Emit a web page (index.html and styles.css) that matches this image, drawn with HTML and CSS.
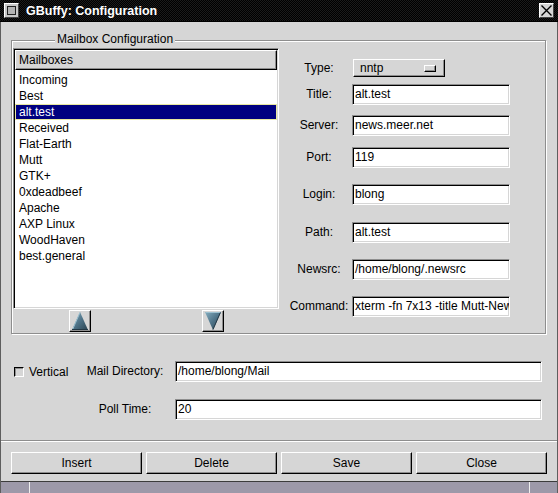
FILE: index.html
```html
<!DOCTYPE html>
<html lang="en">
<head>
    <meta charset="UTF-8">
    <title>GBuffy: Configuration</title>
    <link rel="stylesheet" href="styles.css">
</head>
<body>

<div class="titlebar">
    <span class="win-icon"></span>
    <span class="title">GBuffy: Configuration</span>
    <span class="close-btn">
        <svg width="13" height="13" viewBox="0 0 13 13">
            <path d="M1.5 1.5 L11.5 11.5 M11.5 1.5 L1.5 11.5" stroke="#000" stroke-width="1.4" fill="none"/>
        </svg>
    </span>
</div>

<div class="window">
    <div class="content">
        <!-- Mailbox configuration frame -->
        <div class="frame">
            <span class="frame-label">Mailbox Configuration</span>

            <div class="list-col">
                <div class="list">
                    <div class="list-head">Mailboxes</div>
                    <ul class="items">
                        <li>Incoming</li>
                        <li>Best</li>
                        <li class="selected">alt.test</li>
                        <li>Received</li>
                        <li>Flat-Earth</li>
                        <li>Mutt</li>
                        <li>GTK+</li>
                        <li>0xdeadbeef</li>
                        <li>Apache</li>
                        <li>AXP Linux</li>
                        <li>WoodHaven</li>
                        <li>best.general</li>
                    </ul>
                </div>
                <div class="arrows">
                    <div class="arrow-cell">
                        <button class="arrow-btn">
                            <svg width="16" height="18" viewBox="0 0 16 18">
                                <defs>
                                    <linearGradient id="upFill" x1="0" y1="0" x2="1" y2="1">
                                        <stop offset="0" stop-color="#86aec0"/>
                                        <stop offset="0.5" stop-color="#4e7388"/>
                                        <stop offset="1" stop-color="#2a4351"/>
                                    </linearGradient>
                                </defs>
                                <polygon points="8,0 16,18 0,18" fill="url(#upFill)"/>
                                <path d="M8 0.5 L0.6 17.5" stroke="#9cc0d0" stroke-width="1" fill="none"/>
                                <path d="M0 17.5 L16 17.5" stroke="#233845" stroke-width="1" fill="none"/>
                            </svg>
                        </button>
                    </div>
                    <div class="arrow-cell">
                        <button class="arrow-btn">
                            <svg width="16" height="18" viewBox="0 0 16 18">
                                <defs>
                                    <linearGradient id="downFill" x1="0" y1="0" x2="1" y2="1">
                                        <stop offset="0" stop-color="#86aec0"/>
                                        <stop offset="0.5" stop-color="#4e7388"/>
                                        <stop offset="1" stop-color="#2a4351"/>
                                    </linearGradient>
                                </defs>
                                <polygon points="0,0 16,0 8,18" fill="url(#downFill)"/>
                                <path d="M0.5 0.5 L15.5 0.5" stroke="#9cc0d0" stroke-width="1" fill="none"/>
                                <path d="M15.4 0.5 L8 17.5" stroke="#233845" stroke-width="1" fill="none"/>
                            </svg>
                        </button>
                    </div>
                </div>
            </div>

            <div class="props">
                <span class="prop-label type-label">Type:</span>
                <div class="option-menu">nntp<span class="indicator"></span></div>

                <span class="prop-label">Title:</span>
                <div class="entry">alt.test</div>

                <span class="prop-label">Server:</span>
                <div class="entry">news.meer.net</div>

                <span class="prop-label">Port:</span>
                <div class="entry">119</div>

                <span class="prop-label">Login:</span>
                <div class="entry">blong</div>

                <span class="prop-label">Path:</span>
                <div class="entry">alt.test</div>

                <span class="prop-label">Newsrc:</span>
                <div class="entry">/home/blong/.newsrc</div>

                <span class="prop-label">Command:</span>
                <div class="entry">xterm -fn 7x13 -title Mutt-News -e mutt</div>
            </div>
        </div>

        <!-- General options -->
        <div class="options">
            <label class="check-wrap"><span class="check"></span>Vertical</label>
            <span class="opt-label">Mail Directory:</span>
            <div class="entry">/home/blong/Mail</div>

            <span></span>
            <span class="opt-label">Poll Time:</span>
            <div class="entry">20</div>
        </div>
    </div>

    <div class="separator"></div>

    <div class="actions">
        <button class="btn">Insert</button>
        <button class="btn">Delete</button>
        <button class="btn">Save</button>
        <button class="btn">Close</button>
    </div>

    <div class="statusbar">
        <span class="seg seg-left"></span>
        <span class="seg seg-mid"></span>
        <span class="seg seg-right"></span>
    </div>
</div>

</body>
</html>
```

FILE: styles.css
```css
body {
    margin: 0;
    width: 558px;
    height: 493px;
    overflow: hidden;
    display: flex;
    flex-direction: column;
    background-color: #d6d6d6;
    font-family: "Liberation Sans", Arial, sans-serif;
    font-size: 12px;
    color: #000;
}

/* Barra de título */
.titlebar {
    height: 21px;
    border-bottom: 1px solid #000;
    display: flex;
    align-items: center;
    padding: 0 4px;
    background-color: #050505;
    background-image: repeating-conic-gradient(#000 0 25%, #1b1b1b 0 50%);
    background-size: 2px 2px;
    color: #fff;
}

.win-icon {
    position: relative;
    width: 15px;
    height: 15px;
    box-sizing: border-box;
    background-color: #c8c8c8;
    border: 1px solid;
    border-color: #fff #444 #444 #fff;
}

.win-icon::after {
    content: "";
    position: absolute;
    left: 2px;
    top: 2px;
    width: 9px;
    height: 9px;
    box-sizing: border-box;
    border: 1px solid #222;
    background-color: #b4b4b4;
}

.title {
    margin-left: 7px;
    font-weight: bold;
    font-size: 12.5px;
}

.close-btn {
    margin-left: auto;
    width: 15px;
    height: 15px;
    box-sizing: border-box;
    background-color: #d6d6d6;
    border: 1px solid;
    border-color: #fff #444 #444 #fff;
    display: flex;
    align-items: center;
    justify-content: center;
}

/* Janela */
.window {
    flex: 1;
    display: flex;
    flex-direction: column;
    border-left: 1px solid #5e5e5e;
    border-right: 1px solid #5e5e5e;
}

.content {
    padding: 18px 11px 0 10px;
}

.frame {
    position: relative;
    height: 294px;
    box-sizing: border-box;
    display: flex;
    align-items: flex-start;
    padding: 7px 0 0 1px;
    border: 1px solid #8e8e8e;
    box-shadow: inset 1px 1px #fff, 1px 1px #fff;
}

.frame-label {
    position: absolute;
    top: -9px;
    left: 43px;
    padding: 0 2px;
    line-height: 14px;
    background-color: #d6d6d6;
}

.list-col {
    width: 266px;
    display: flex;
    flex-direction: column;
}

.list {
    height: 261px;
    box-sizing: border-box;
    padding: 1px;
    background-color: #fff;
    border: 1px solid;
    border-color: #8e8e8e #fff #fff #8e8e8e;
    box-shadow: inset 1px 1px #000, inset -1px -1px #d6d6d6;
}

.list-head {
    height: 20px;
    box-sizing: border-box;
    padding-left: 3px;
    line-height: 18px;
    background-color: #d6d6d6;
    border: 1px solid;
    border-color: #fff #000 #000 #fff;
    box-shadow: inset -1px -1px #8e8e8e;
}

.items {
    list-style: none;
    margin: 0;
    padding: 2px 0 0;
}

.items li {
    height: 16px;
    line-height: 16px;
    padding-left: 4px;
}

.items li.selected {
    background-color: #000080;
    color: #fff;
    outline: 1px solid #e8e8a0;
    outline-offset: -1px;
}

.arrows {
    display: flex;
    height: 24px;
}

.arrow-cell {
    flex: 1;
    display: flex;
    justify-content: center;
    padding-top: 1px;
}

.arrow-btn {
    width: 22px;
    height: 22px;
    box-sizing: border-box;
    padding: 0;
    background-color: #d6d6d6;
    border: 1px solid;
    border-color: #fff #000 #000 #fff;
    box-shadow: inset -1px -1px #8e8e8e;
    display: flex;
    align-items: center;
    justify-content: center;
}

/* Campos da direita */
.props {
    display: grid;
    grid-template-columns: 64px 158px;
    grid-template-rows: 25px 31px 32px 37px 38px 37px 37px 21px;
    column-gap: 1px;
    align-items: start;
    margin: 11px 0 0 8px;
}

.prop-label {
    text-align: center;
    line-height: 21px;
}

.type-label {
    line-height: 18px;
}

.option-menu {
    width: 92px;
    height: 18px;
    margin-left: 1px;
    box-sizing: border-box;
    display: flex;
    align-items: center;
    padding-left: 6px;
    background-color: #d6d6d6;
    border: 1px solid;
    border-color: #fff #000 #000 #fff;
    box-shadow: inset -1px -1px #8e8e8e;
}

.indicator {
    width: 12px;
    height: 7px;
    margin-left: auto;
    margin-right: 8px;
    box-sizing: border-box;
    border: 1px solid;
    border-color: #fff #000 #000 #fff;
    box-shadow: inset -1px -1px #8e8e8e;
}

.entry {
    height: 21px;
    box-sizing: border-box;
    padding: 0 2px;
    line-height: 19px;
    white-space: nowrap;
    overflow: hidden;
    background-color: #fff;
    border: 1px solid;
    border-color: #8e8e8e #fff #fff #8e8e8e;
    box-shadow: inset 1px 1px #000, inset -1px -1px #d6d6d6;
}

/* Opções gerais */
.options {
    display: grid;
    grid-template-columns: 61px 94px 367px;
    grid-template-rows: 21px 21px;
    column-gap: 3px;
    row-gap: 17px;
    margin: 27px 0 0 3px;
}

.check-wrap {
    display: flex;
    align-items: center;
    gap: 5px;
}

.check {
    width: 10px;
    height: 10px;
    box-sizing: border-box;
    background-color: #d6d6d6;
    border: 1px solid;
    border-color: #000 #fff #fff #000;
    box-shadow: inset 1px 1px #8e8e8e;
}

.opt-label {
    text-align: center;
    line-height: 21px;
}

.separator {
    margin-top: 20px;
    height: 1px;
    border-top: 1px solid #8e8e8e;
    background-color: #fff;
}

/* Botões */
.actions {
    display: flex;
    gap: 4px;
    margin-top: 10px;
    padding: 0 10px;
}

.btn {
    width: 131px;
    height: 22px;
    box-sizing: border-box;
    padding: 0;
    font-family: "Liberation Sans", Arial, sans-serif;
    font-size: 12px;
    color: #000;
    background-color: #d6d6d6;
    border: 1px solid;
    border-color: #fff #000 #000 #fff;
    box-shadow: inset -1px -1px #8e8e8e;
}

.statusbar {
    margin-top: auto;
    height: 11px;
    display: flex;
    border-top: 1px solid #3c3c3c;
    background-color: #9d99a9;
}

.seg-left {
    width: 28px;
    border-right: 1px solid #eee;
}

.seg-mid {
    flex: 1;
    border-right: 1px solid #eee;
}

.seg-right {
    width: 27px;
}
```
